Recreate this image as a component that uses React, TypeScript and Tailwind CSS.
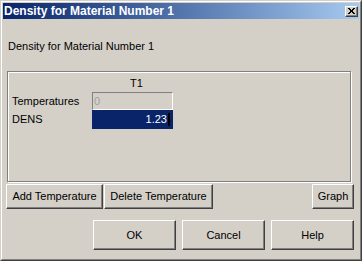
import React from "react";

const btn =
  "flex items-center justify-center bg-[#d4d0c8] border border-t-white border-l-white border-b-[#404040] border-r-[#404040] shadow-[inset_-1px_-1px_0_#808080] text-black";

export default function App() {
  return (
    <div className="w-[362px] h-[261px] bg-[#d4d0c8] border border-t-[#d4d0c8] border-l-[#d4d0c8] border-b-[#404040] border-r-[#404040] font-['Liberation_Sans',Arial,sans-serif] text-[11px] text-black overflow-hidden">
      <div className="h-full border border-t-white border-l-white border-b-[#808080] border-r-[#808080] p-px flex flex-col">
        {/* Title bar */}
        <div className="h-[16px] flex items-center justify-between bg-gradient-to-r from-[#0a246a] to-[#a6caf0] pl-[1px] pr-[1px]">
          <span className="text-white font-bold text-[12px] leading-none">Density for Material Number 1</span>
          <div className="w-[13px] h-[11px] bg-[#d4d0c8] border border-t-white border-l-white border-b-[#404040] border-r-[#404040] shadow-[inset_-1px_-1px_0_#808080] flex items-center justify-center">
            <svg width="7" height="6" viewBox="0 0 7 6">
              <path d="M0 0 L6 6 M1 0 L7 6 M6 0 L0 6 M7 0 L1 6" stroke="#000" strokeWidth="1" />
            </svg>
          </div>
        </div>

        {/* Label */}
        <div className="mt-[21px] ml-[5px] leading-[13px]">Density for Material Number 1</div>

        {/* Group box */}
        <div className="mt-[18px] ml-[4px] w-[344px] h-[111px] border border-[#808080] shadow-[inset_1px_1px_0_#fff,1px_1px_0_#fff]">
          <div className="mt-[5px] grid grid-cols-[84px_81px] grid-rows-[13px_18px_19px] gap-y-0 pl-[4px]">
            <div></div>
            <div className="text-center leading-[13px]">T1</div>
            <div className="flex items-center mt-[4px]">Temperatures</div>
            <div className="mt-[2px] ml-[-4px] w-[81px] h-[18px] border border-t-[#808080] border-l-[#808080] border-b-white border-r-white bg-[#d4d0c8] flex items-center pl-[1px] text-[#a0a0a0]">
              0
            </div>
            <div className="flex items-center mt-[4px]">DENS</div>
            <div className="mt-[2px] ml-[-4px] w-[81px] h-[19px] bg-[#0a246a] flex items-center justify-end pr-[3px] text-white">
              <span>1.23</span>
              <span className="ml-[1px] w-[2px] h-[13px] bg-black"></span>
            </div>
          </div>
        </div>

        {/* Buttons row */}
        <div className="mt-[2px] ml-[3px] flex items-center h-[25px]">
          <div className={`${btn} w-[97px] h-[25px]`}>Add Temperature</div>
          <div className={`${btn} ml-[1px] w-[109px] h-[25px]`}>Delete Temperature</div>
          <div className={`${btn} ml-auto mr-[5px] w-[42px] h-[25px]`}>Graph</div>
        </div>

        {/* Bottom buttons */}
        <div className="mt-[11px] flex justify-end gap-[6px] pr-[5px]">
          <div className={`${btn} w-[83px] h-[30px]`}>OK</div>
          <div className={`${btn} w-[83px] h-[30px]`}>Cancel</div>
          <div className={`${btn} w-[83px] h-[30px]`}>Help</div>
        </div>
      </div>
    </div>
  );
}
